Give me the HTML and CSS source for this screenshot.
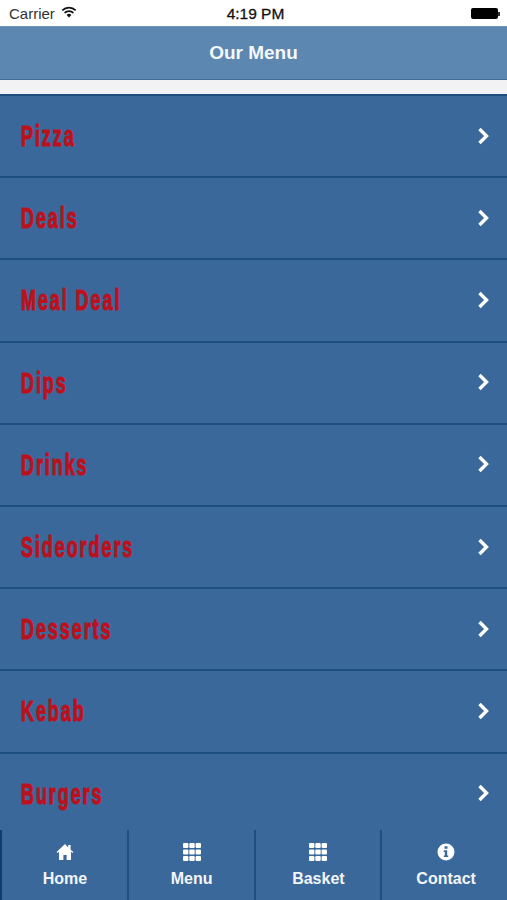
FILE: index.html
```html
<!DOCTYPE html>
<html lang="en">
<head>
  <meta charset="UTF-8" />
  <meta name="viewport" content="width=device-width,initial-scale=1.0" />
  <title>Our Menu</title>
  <link rel="stylesheet" href="styles.css">
</head>
<body>
  <div class="app">
    <div class="status">
      <div class="status-left">
        <span>Carrier</span>
        <svg class="wifi" viewBox="0 0 16 12" width="16" height="12">
          <path d="M8 11.5 5.6 8.9a3.4 3.4 0 0 1 4.8 0z" fill="#111"/>
          <path d="M3.6 6.9a6.2 6.2 0 0 1 8.8 0M1.3 4.4a9.4 9.4 0 0 1 13.4 0" fill="none" stroke="#111" stroke-width="1.7"/>
        </svg>
      </div>
      <div class="status-time">4:19 PM</div>
      <div class="status-right">
        <div class="battery"></div>
        <div class="battery-tip"></div>
      </div>
    </div>

    <header class="header">Our Menu</header>
    <div class="strip"></div>

    <ul class="menu">
      <li class="menu-row"><span class="menu-name">Pizza</span><svg class="chevron" viewBox="0 0 12 18"><path d="M2.5 2 9.5 9l-7 7" /></svg></li>
      <li class="menu-row"><span class="menu-name">Deals</span><svg class="chevron" viewBox="0 0 12 18"><path d="M2.5 2 9.5 9l-7 7" /></svg></li>
      <li class="menu-row"><span class="menu-name">Meal Deal</span><svg class="chevron" viewBox="0 0 12 18"><path d="M2.5 2 9.5 9l-7 7" /></svg></li>
      <li class="menu-row"><span class="menu-name">Dips</span><svg class="chevron" viewBox="0 0 12 18"><path d="M2.5 2 9.5 9l-7 7" /></svg></li>
      <li class="menu-row"><span class="menu-name">Drinks</span><svg class="chevron" viewBox="0 0 12 18"><path d="M2.5 2 9.5 9l-7 7" /></svg></li>
      <li class="menu-row"><span class="menu-name">Sideorders</span><svg class="chevron" viewBox="0 0 12 18"><path d="M2.5 2 9.5 9l-7 7" /></svg></li>
      <li class="menu-row"><span class="menu-name">Desserts</span><svg class="chevron" viewBox="0 0 12 18"><path d="M2.5 2 9.5 9l-7 7" /></svg></li>
      <li class="menu-row"><span class="menu-name">Kebab</span><svg class="chevron" viewBox="0 0 12 18"><path d="M2.5 2 9.5 9l-7 7" /></svg></li>
      <li class="menu-row"><span class="menu-name">Burgers</span><svg class="chevron" viewBox="0 0 12 18"><path d="M2.5 2 9.5 9l-7 7" /></svg></li>
    </ul>

    <nav class="tabs">
      <div class="tab">
        <svg class="tab-icon" viewBox="0 0 18 18"><path d="M9 1 .6 9l.9 1L3 8.7V17h4.4v-5h3.2v5H15V8.7l1.5 1.3.9-1L14.6 6.8V2h-2.4v2.5z"/></svg>
        <span>Home</span>
      </div>
      <div class="tab">
        <svg class="tab-icon" viewBox="0 0 18 18"><use href="#grid"/></svg>
        <span>Menu</span>
      </div>
      <div class="tab">
        <svg class="tab-icon" viewBox="0 0 18 18"><use href="#grid"/></svg>
        <span>Basket</span>
      </div>
      <div class="tab tab-last">
        <svg class="tab-icon" viewBox="0 0 18 18"><path fill-rule="evenodd" d="M9 .5a8.500 8.500 0 1 1 0 17 8.500 8.500 0 0 1 0-17zM7.500 3.200v2.600h3V3.200zM6.800 7.300v1.600h1v3.500h-1V14h4.400v-1.600h-1V7.300z"/></svg>
        <span>Contact</span>
      </div>
    </nav>
  </div>

  <svg class="defs" width="0" height="0">
    <defs>
      <g id="grid">
        <rect x="0" y="0" width="5.400" height="5" rx="1"/><rect x="6.300" y="0" width="5.400" height="5" rx="1"/><rect x="12.600" y="0" width="5.400" height="5" rx="1"/>
        <rect x="0" y="6.500" width="5.400" height="5" rx="1"/><rect x="6.300" y="6.500" width="5.400" height="5" rx="1"/><rect x="12.600" y="6.500" width="5.400" height="5" rx="1"/>
        <rect x="0" y="13" width="5.400" height="5" rx="1"/><rect x="6.300" y="13" width="5.400" height="5" rx="1"/><rect x="12.600" y="13" width="5.400" height="5" rx="1"/>
      </g>
    </defs>
  </svg>
</body>
</html>
```

FILE: styles.css
```css
* { margin: 0; padding: 0; box-sizing: border-box; }
body {
  font-family: "Liberation Sans", Arial, sans-serif;
  background: #f2f2f4;
}
.app {
  height: 100vh;
  display: flex;
  flex-direction: column;
  overflow: hidden;
}
.defs { position: absolute; }

/* status bar */
.status {
  height: 26px;
  flex: none;
  background: #fff;
  display: grid;
  grid-template-columns: 1fr auto 1fr;
  align-items: center;
  padding: 1px 7px 0 9px;
  font-size: 15px;
  color: #333;
}
.status-left { display: flex; align-items: center; gap: 6px; }
.wifi { margin-top: -3px; }
.status-time { margin-left: 2px; font-size: 15.5px; color: #111; -webkit-text-stroke: 0.3px #111; }
.status-right { display: flex; align-items: center; justify-content: flex-end; }
.battery { width: 27px; height: 11px; background: #000; border-radius: 2px; }
.battery-tip { width: 2px; height: 4px; background: #333; }

/* header */
.header {
  height: 54px;
  flex: none;
  background: #5c87b0;
  border-top: 1px solid #6f94b8;
  border-bottom: 1px solid #3f6b96;
  color: #f4f7fa;
  font-size: 19px;
  font-weight: 700;
  display: flex;
  align-items: center;
  justify-content: center;
}
.strip {
  height: 14px;
  flex: none;
  background: #f2f2f4;
}

/* menu list */
.menu {
  flex: 1;
  min-height: 0;
  list-style: none;
  background: #3b689b;
  overflow: hidden;
}
.menu-row {
  height: 82.2px;
  border-top: 2px solid #1d4f7f;
  display: flex;
  align-items: center;
  justify-content: space-between;
  padding: 0 18px 0 21px;
}
/* no condensed face installed, so squeeze the bold one */
.menu-name {
  display: inline-block;
  font-weight: 700;
  font-size: 30px;
  letter-spacing: 3.2px;
  color: #bc111d;
  -webkit-text-stroke: 1.1px #bc111d;
  transform: scaleX(0.6);
  transform-origin: left center;
}
.chevron {
  width: 12px;
  height: 18px;
  margin-top: -1px;
  fill: none;
  stroke: #fff;
  stroke-width: 3.4;
}

/* bottom tabs */
.tabs {
  height: 70px;
  flex: none;
  background: #3b689b;
  display: grid;
  grid-template-columns: repeat(4, 1fr);
}
.tab {
  border-left: 2px solid #1d4f7f;
  display: flex;
  flex-direction: column;
  align-items: center;
  padding: 13px 0 0 1px;
  gap: 9px;
  color: #f2f5f9;
  font-size: 16px;
  font-weight: 700;
}
.tab:first-child { border-left-color: #0f3f70; }
.tab-last { padding-left: 3px; }
.tab-icon {
  width: 18px;
  height: 18px;
  fill: #fff;
}
```
